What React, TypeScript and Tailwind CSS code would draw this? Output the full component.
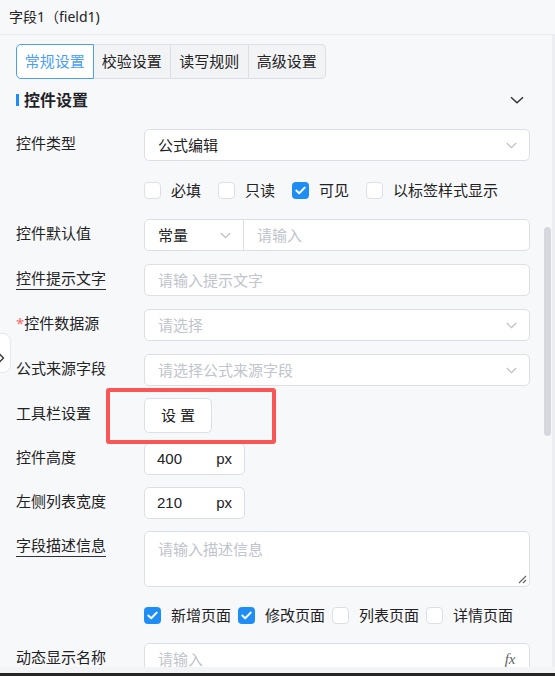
import React from "react";

// Field property panel: form editor settings for a single field

function ChevronDown({ className = "" }: { className?: string }) {
  return (
    <svg width="11" height="7" viewBox="0 0 11 7" className={className}>
      <path d="M0.8 1 L5.5 5.7 L10.2 1" fill="none" stroke="#b9bdc4" strokeWidth="1.1" />
    </svg>
  );
}

function Check() {
  return (
    <svg width="11" height="9" viewBox="0 0 11 9">
      <path d="M1.3 4.6 L4.2 7.3 L9.7 1.6" fill="none" stroke="#ffffff" strokeWidth="2" strokeLinecap="round" strokeLinejoin="round" />
    </svg>
  );
}

function CheckItem({ label, checked, gap }: { label: string; checked?: boolean; gap: string }) {
  return (
    <div className={`flex items-center ${gap}`}>
      {checked ? (
        <span className="w-[17px] h-[17px] rounded-[4px] bg-[#1e8ef5] flex items-center justify-center">
          <Check />
        </span>
      ) : (
        <span className="w-[17px] h-[17px] rounded-[4px] border border-[#dcdfe6] bg-white" />
      )}
      <span className="ml-[10px] text-[15px] text-[#222] leading-none">{label}</span>
    </div>
  );
}

function Row({ label, children, className = "" }: { label: React.ReactNode; children: React.ReactNode; className?: string }) {
  return (
    <div className={`flex ${className}`}>
      <div className="w-[128px] shrink-0 text-[15px] leading-[28px] text-[#222]">{label}</div>
      <div className="flex-1 min-w-0">{children}</div>
    </div>
  );
}

function Select({ value, placeholder }: { value?: string; placeholder?: string }) {
  return (
    <div className="h-8 rounded-[5px] border border-[#dcdfe6] bg-white flex items-center justify-between pl-[13px] pr-[12px]">
      {value ? (
        <span className="text-[15px] text-[#222]">{value}</span>
      ) : (
        <span className="text-[15px] text-[#c0c4cc]">{placeholder}</span>
      )}
      <ChevronDown />
    </div>
  );
}

function TextInput({ placeholder, suffix }: { placeholder: string; suffix?: React.ReactNode }) {
  return (
    <div className="h-8 rounded-[5px] border border-[#dcdfe6] bg-white flex items-center justify-between pl-[13px] pr-[12px]">
      <span className="text-[15px] text-[#c0c4cc]">{placeholder}</span>
      {suffix}
    </div>
  );
}

function NumberInput({ value }: { value: string }) {
  return (
    <div className="h-8 w-[101px] rounded-[5px] border border-[#dcdfe6] bg-white flex items-center justify-between pl-[12px] pr-[12px] text-[15px] text-[#222] font-['Liberation_Sans','Noto_Sans_CJK_SC',sans-serif]">
      <span>{value}</span>
      <span>px</span>
    </div>
  );
}

export default function App() {
  const tabs = ["常规设置", "校验设置", "读写规则", "高级设置"];

  return (
    <div className="relative w-[555px] h-[676px] overflow-hidden bg-[#f7f8fa] font-['Noto_Sans','Noto_Sans_CJK_SC',sans-serif]">
      {/* header */}
      <div className="h-[35px] border-b border-[#e8eaee] pl-[9px] flex items-center">
        <span className="text-[14px] text-[#222] -mt-[2px]">字段1（field1)</span>
      </div>

      {/* scrolling body */}
      <div className="h-[632px] overflow-hidden pl-[16px] pr-[25.5px] pt-[9px]">
        <div className="flex h-[35px] w-[310px]">
          {tabs.map((t, i) =>
            i === 0 ? (
              <div
                key={t}
                className="w-[77.5px] h-full flex items-center justify-center bg-white border border-[#4a9ff5] rounded-l-[5px] text-[15px] text-[#4a9ff5]"
              >
                {t}
              </div>
            ) : (
              <div
                key={t}
                className={`w-[77.5px] h-full flex items-center justify-center bg-[#f2f3f5] border-y border-r border-[#dcdfe6] text-[15px] text-[#222] ${
                  i === 3 ? "rounded-r-[5px]" : ""
                }`}
              >
                {t}
              </div>
            )
          )}
        </div>

        {/* section title */}
        <div className="mt-[10px] h-[22px] flex items-center justify-between pr-[6px]">
          <div className="flex items-center">
            <span className="w-[3px] h-[12px] bg-[#1e8ef5]" />
            <span className="ml-[5px] text-[16px] font-bold text-[#1f2329] leading-none">控件设置</span>
          </div>
          <svg width="14" height="8" viewBox="0 0 14 8">
            <path d="M1 1.2 L7 6.8 L13 1.2" fill="none" stroke="#303133" strokeWidth="1.4" />
          </svg>
        </div>

        <Row label="控件类型" className="mt-[18px]">
          <Select value="公式编辑" />
        </Row>

        <Row label="" className="mt-[13px]">
          <div className="h-8 flex items-center">
            <CheckItem label="必填" gap="mr-[17px]" />
            <CheckItem label="只读" gap="mr-[17px]" />
            <CheckItem label="可见" checked gap="mr-[17px]" />
            <CheckItem label="以标签样式显示" gap="" />
          </div>
        </Row>

        <Row label="控件默认值" className="mt-[13px]">
          <div className="h-8 rounded-[5px] border border-[#dcdfe6] bg-white flex">
            <div className="w-[99px] border-r border-[#dcdfe6] flex items-center justify-between pl-[13px] pr-[12px]">
              <span className="text-[15px] text-[#222]">常量</span>
              <ChevronDown />
            </div>
            <div className="flex items-center pl-[13px] text-[15px] text-[#c0c4cc]">请输入</div>
          </div>
        </Row>

        <Row
          label={<span className="underline underline-offset-[5px] decoration-[#303133]">控件提示文字</span>}
          className="mt-[13px]"
        >
          <TextInput placeholder="请输入提示文字" />
        </Row>

        <Row
          label={
            <span>
              <span className="text-[#f56c6c]">*</span>控件数据源
            </span>
          }
          className="mt-[13px]"
        >
          <Select placeholder="请选择" />
        </Row>

        <Row label="公式来源字段" className="mt-[13px]">
          <Select placeholder="请选择公式来源字段" />
        </Row>

        <Row label="工具栏设置" className="mt-[13px]">
          <div className="h-8 flex items-center">
            <button className="h-[35px] w-[68px] rounded-[5px] border border-[#dcdfe6] bg-white text-[15px] text-[#222]">
              设 置
            </button>
          </div>
        </Row>

        <Row label="控件高度" className="mt-[12px]">
          <NumberInput value="400" />
        </Row>

        <Row label="左侧列表宽度" className="mt-[12px]">
          <NumberInput value="210" />
        </Row>

        <Row
          label={<span className="underline underline-offset-[5px] decoration-[#303133]">字段描述信息</span>}
          className="mt-[12px]"
        >
          <div className="relative h-[56px] rounded-[5px] border border-[#dcdfe6] bg-white pl-[13px] pt-[6px] text-[15px] leading-[22px] text-[#c0c4cc]">
            请输入描述信息
            <svg width="10" height="10" viewBox="0 0 10 10" className="absolute right-[2px] bottom-[2px]">
              <path d="M9 2 L2 9 M9 6 L6 9" stroke="#606266" strokeWidth="1.1" />
            </svg>
          </div>
        </Row>

        <Row label="" className="mt-[12px]">
          <div className="h-8 flex items-center">
            <CheckItem label="新增页面" checked gap="mr-[7px]" />
            <CheckItem label="修改页面" checked gap="mr-[7px]" />
            <CheckItem label="列表页面" gap="mr-[7px]" />
            <CheckItem label="详情页面" gap="" />
          </div>
        </Row>

        <Row label="动态显示名称" className="mt-[12px]">
          <TextInput
            placeholder="请输入"
            suffix={
              <span className="italic text-[15px] text-[#606266] font-['Liberation_Serif',serif] pr-[1px]">fx</span>
            }
          />
        </Row>
      </div>

      {/* window bottom edge */}
      <div className="h-[6px] bg-[#f3f4f6]" />
      <div className="h-[3px] bg-[#262626]" />

      {/* scrollbar */}
      <div className="absolute left-[544px] top-[227px] w-[7px] h-[209px] rounded-full bg-[#d6d8dd]" />
      <div className="absolute right-0 top-[35px] w-[3px] h-[632px] bg-[#eceef1]" />

      {/* collapse handle */}
      <div className="absolute left-[-12px] top-[333px] w-[23px] h-[40px] rounded-[8px] border border-[#e4e7ed] bg-white" />
      <svg width="8" height="12" viewBox="0 0 8 12" className="absolute left-[-2px] top-[352px]">
        <path d="M1 1.5 L5.5 6 L1 10.5" fill="none" stroke="#303133" strokeWidth="1.3" />
      </svg>

      {/* highlight frame around toolbar button */}
      <div className="absolute left-[106px] top-[388px] w-[170px] h-[56px] rounded-[3px] border-[4px] border-[#fb5656]" />
    </div>
  );
}
